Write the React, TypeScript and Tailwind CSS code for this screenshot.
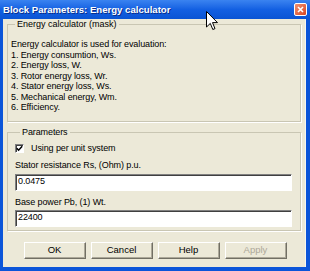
const lines = [
  'Energy calculator is used for evaluation:',
  '1. Energy consumtion, Ws.',
  '2. Energy loss, W.',
  '3. Rotor energy loss, Wr.',
  '4. Stator energy loss, Ws.',
  '5. Mechanical energy, Wm.',
  '6. Efficiency.',
];

const buttons = [
  { label: 'OK', disabled: false },
  { label: 'Cancel', disabled: false },
  { label: 'Help', disabled: false },
  { label: 'Apply', disabled: true },
];

export default function App() {
  return (
    <div
      className="relative w-[310px] h-[271px] flex flex-col bg-[#0b55d9] text-black overflow-hidden"
      style={{ fontFamily: '"Liberation Sans", Arial, sans-serif' }}
    >
      {/* Title bar */}
      <div className="h-[19px] flex items-center justify-between pl-[3px] pr-[3px] bg-gradient-to-b from-[#3a83f0] via-[#1360e2] to-[#0a54d4]">
        <span className="text-[9.6px] font-bold text-white leading-none [text-shadow:1px_1px_0_#0a2d8a]">
          Block Parameters: Energy calculator
        </span>
        <div className="w-[13px] h-[13px] rounded-[2px] border border-white bg-gradient-to-br from-[#f09070] to-[#d8441e] flex items-center justify-center">
          <svg width="7" height="7" viewBox="0 0 7 7">
            <path d="M1 1 L6 6 M6 1 L1 6" stroke="#fff" strokeWidth="1.6" />
          </svg>
        </div>
      </div>

      {/* Body */}
      <div className="flex-1 ml-[3px] mr-[4px] mb-[4px] bg-[#ece9d8] px-[4px] flex flex-col border-r border-[#f7f6ef]">
        {/* Mask description */}
        <fieldset className="border border-[#c9c6b3] shadow-[1px_1px_0_#fff] pl-[3px] pb-[8px]">
          <legend className="ml-[4px] px-[2px] text-[9px] leading-[11px]">Energy calculator (mask)</legend>
          <div className="mt-[9px] text-[9px] leading-[10.5px] tracking-[-0.1px]">
            {lines.map((l) => (
              <div key={l}>{l}</div>
            ))}
          </div>
        </fieldset>

        {/* Parameters */}
        <fieldset className="mt-[5px] border border-[#c9c6b3] shadow-[1px_1px_0_#fff] pl-[7px] pr-[8px] pb-[3px] text-[9px] tracking-[-0.1px]">
          <legend className="ml-[5px] px-[2px] leading-[11px]">Parameters</legend>
          <div className="mt-[5px] h-[11px] flex items-center gap-[7px]">
            <div className="w-[9px] h-[9px] bg-white border border-t-[#808080] border-l-[#808080] border-r-white border-b-white shadow-[inset_1px_1px_0_#404040] flex items-center justify-center">
              <svg width="7" height="7" viewBox="0 0 7 7">
                <path d="M0.8 3.2 L2.6 5.2 L6.2 1.2" stroke="#000" strokeWidth="1.5" fill="none" />
              </svg>
            </div>
            <span className="leading-[11px]">Using per unit system</span>
          </div>
          <div className="mt-[6px] leading-[11px]">Stator resistance Rs, (Ohm) p.u.</div>
          <div className="mt-[3px] h-[17px] bg-white border border-t-[#808080] border-l-[#808080] border-r-[#fff] border-b-[#fff] shadow-[inset_1px_1px_0_#404040] flex items-center pl-[2px]">
            0.0475
          </div>
          <div className="mt-[6px] leading-[11px]">Base power Pb, (1) Wt.</div>
          <div className="mt-[2px] h-[17px] bg-white border border-t-[#808080] border-l-[#808080] border-r-[#fff] border-b-[#fff] shadow-[inset_1px_1px_0_#404040] flex items-center pl-[2px]">
            22400
          </div>
        </fieldset>

        {/* Buttons */}
        <div className="mt-[11px] flex justify-center gap-[5px] pl-[2px]">
          {buttons.map((b) => (
            <div
              key={b.label}
              className={
                'w-[62px] h-[17px] flex items-center justify-center text-[9.5px] bg-[#ece9d8] border border-t-white border-l-white border-r-[#716f64] border-b-[#716f64] shadow-[inset_-1px_-1px_0_#aca899] ' +
                (b.disabled ? 'text-[#aca899]' : 'text-black')
              }
            >
              {b.label}
            </div>
          ))}
        </div>
      </div>

      {/* Mouse pointer */}
      <svg className="absolute left-[206px] top-[11px]" width="13" height="21" viewBox="0 0 13 21">
        <path
          d="M0.5 0.5 L0.5 16 L4.3 12.4 L6.8 18.5 L9 17.6 L6.5 11.6 L11.5 11.6 Z"
          fill="#fff"
          stroke="#000"
          strokeWidth="1"
          strokeLinejoin="round"
        />
      </svg>
    </div>
  );
}
